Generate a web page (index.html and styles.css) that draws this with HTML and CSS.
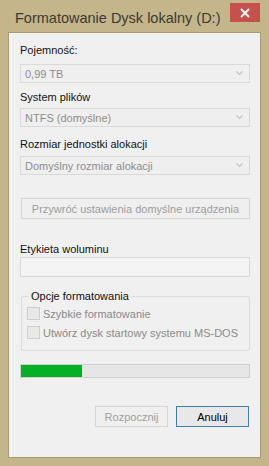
FILE: index.html
```html
<!DOCTYPE html>
<html lang="pl">
<head>
<meta charset="utf-8">
<title>Formatowanie Dysk lokalny (D:)</title>
<link rel="stylesheet" href="styles.css">
</head>
<body>
<div class="window">
  <div class="titlebar">
    <div class="title">Formatowanie Dysk lokalny (D:)</div>
    <div class="close">
      <svg width="12" height="12" viewBox="0 0 12 12"><path d="M2 2 L10 10 M10 2 L2 10" stroke="#fff" stroke-width="2" fill="none"/></svg>
    </div>
  </div>
  <div class="client">
    <div class="label l1">Pojemność:</div>
    <div class="combo c1"><span>0,99 TB</span><svg class="chev" width="7" height="5" viewBox="0 0 7 5"><path d="M0.5 0.5 L3.5 3.5 L6.5 0.5" stroke="#c4c4c4" stroke-width="1.2" fill="none"/></svg></div>
    <div class="label l2">System plików</div>
    <div class="combo c2"><span>NTFS (domyślne)</span><svg class="chev" width="7" height="5" viewBox="0 0 7 5"><path d="M0.5 0.5 L3.5 3.5 L6.5 0.5" stroke="#c4c4c4" stroke-width="1.2" fill="none"/></svg></div>
    <div class="label l3">Rozmiar jednostki alokacji</div>
    <div class="combo c3"><span>Domyślny rozmiar alokacji</span><svg class="chev" width="7" height="5" viewBox="0 0 7 5"><path d="M0.5 0.5 L3.5 3.5 L6.5 0.5" stroke="#c4c4c4" stroke-width="1.2" fill="none"/></svg></div>
    <div class="btn wide disabled">Przywróć ustawienia domyślne urządzenia</div>
    <div class="label l4">Etykieta woluminu</div>
    <div class="textbox"></div>
    <fieldset class="group">
      <legend>Opcje formatowania</legend>
      <div class="check"><span class="box"></span><span>Szybkie formatowanie</span></div>
      <div class="check"><span class="box"></span><span>Utwórz dysk startowy systemu MS-DOS</span></div>
    </fieldset>
    <div class="progress"><div class="fill" style="width:61px"></div></div>
    <div class="buttons">
      <div class="btn disabled">Rozpocznij</div>
      <div class="btn default">Anuluj</div>
    </div>
  </div>
</div>
</body>
</html>
```
FILE: styles.css
```css
html, body {
  margin: 0;
  padding: 0;
}
body {
  width: 269px;
  height: 466px;
  background: #c4b58a;
  font-family: "Liberation Sans", Arial, sans-serif;
  font-size: 11px;
  overflow: hidden;
}
.window {
  width: 269px;
  height: 466px;
  display: flex;
  flex-direction: column;
}
.titlebar {
  height: 32px;
  display: flex;
  position: relative;
}
.title {
  margin: 8px 0 0 15px;
  font-size: 14.5px;
  line-height: 20px;
  color: #3b3a34;
  white-space: nowrap;
}
.close {
  position: absolute;
  left: 230px;
  top: 3px;
  width: 30px;
  height: 19px;
  background: #c7504c;
  display: flex;
  align-items: center;
  justify-content: center;
}
.client {
  flex: 1;
  margin: 0 8px 8px 8px;
  background: #f0f0f0;
  border: 1px solid #a89b72;
  padding: 9px 10px 0 11px;
  display: flex;
  flex-direction: column;
}
.label {
  line-height: 16px;
  height: 16px;
  color: #111;
  white-space: nowrap;
}
.l2 { margin-top: 6px; }
.l3 { margin-top: 9px; }
.l4 { margin-top: 22px; }
.combo {
  height: 17px;
  border: 1px solid #d9d9d9;
  background: #efefef;
  color: #8d8d8d;
  display: flex;
  align-items: center;
  justify-content: space-between;
  padding: 0 6px 0 4px;
  white-space: nowrap;
}
.c1 { margin-top: 6px; }
.c2 { margin-top: 3px; }
.c3 { margin-top: 4px; }
.chev { flex: none; }
.btn {
  height: 19px;
  border: 1px solid #acacac;
  background: #e5e5e5;
  display: flex;
  align-items: center;
  justify-content: center;
  color: #000;
  white-space: nowrap;
}
.btn.disabled {
  border-color: #d5d5d5;
  background: #efefef;
  color: #9d9d9d;
}
.btn.wide {
  margin-top: 23px;
  margin-left: 1px;
}
.textbox {
  height: 18px;
  border: 1px solid #d9d9d9;
  background: #f4f4f4;
}
.group {
  margin: 11px 0 0 1px;
  padding: 0 0 8px 5px;
  border: 1px solid #dcdcdc;
  border-radius: 2px;
  min-width: 0;
}
.group legend {
  margin-left: 2px;
  padding: 0 2px;
  line-height: 16px;
  color: #111;
}
.check {
  height: 19px;
  display: flex;
  align-items: center;
  gap: 3px;
  color: #8a8a8a;
  white-space: nowrap;
}
.check .box {
  flex: none;
  width: 11px;
  height: 11px;
  border: 1px solid #cdcdcd;
  background: #e8e8e8;
}
.progress {
  margin-top: 13px;
  height: 12px;
  border: 1px solid #cfcfcf;
  background: #e6e6e6;
  display: flex;
}
.fill {
  background: #06b025;
}
.buttons {
  margin-top: 28px;
  display: flex;
  justify-content: flex-end;
  gap: 8px;
  padding-right: 1px;
}
.buttons .btn {
  width: 71px;
}
.btn.default {
  border-color: #3c7fb1;
  background: #e8e8e8;
}
```
